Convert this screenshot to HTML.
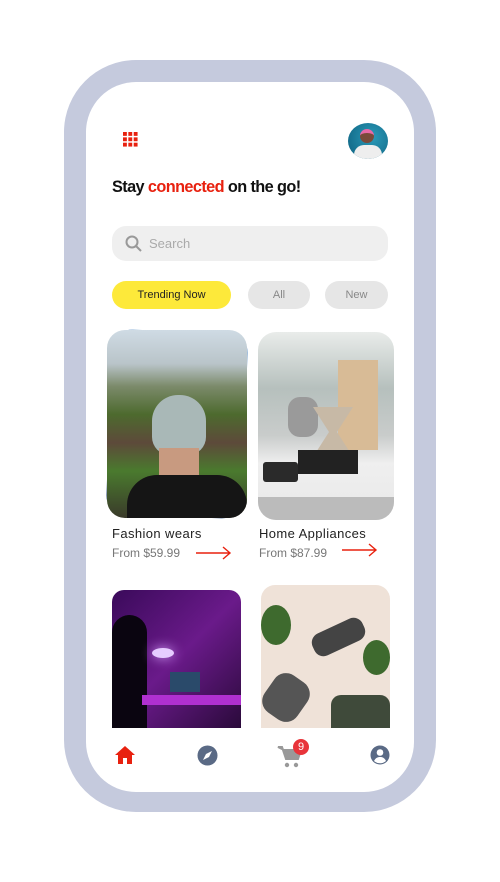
<!DOCTYPE html>
<html><head><style>
*{margin:0;padding:0;box-sizing:border-box}
body{width:500px;height:882px;background:#fff;position:relative;overflow:hidden;font-family:"Liberation Sans",sans-serif}
.frame{position:absolute;left:64px;top:60px;width:372px;height:752px;background:#c5cadd;border-radius:72px}
.screen{position:absolute;left:86px;top:82px;width:328px;height:710px;background:#fff;border-radius:50px;overflow:hidden}
.a{position:absolute}
.pill{position:absolute;top:281px;height:28px;border-radius:14px;font-size:11px;display:flex;align-items:center;justify-content:center}
.t{font-size:13px;color:#222;letter-spacing:.4px}
.p{font-size:12px;color:#777}
</style></head><body>
<div class="frame"></div>
<div class="screen"></div>
<svg class="a" style="left:123px;top:132px" width="15" height="15" viewBox="0 0 14 14" fill="#e8210f">
<rect x="0" y="0" width="3.6" height="3.6"/><rect x="5" y="0" width="3.6" height="3.6"/><rect x="10" y="0" width="3.6" height="3.6"/>
<rect x="0" y="5" width="3.6" height="3.6"/><rect x="5" y="5" width="3.6" height="3.6"/><rect x="10" y="5" width="3.6" height="3.6"/>
<rect x="0" y="10" width="3.6" height="3.6"/><rect x="5" y="10" width="3.6" height="3.6"/><rect x="10" y="10" width="3.6" height="3.6"/></svg>
<div class="a" style="left:348px;top:123px;width:40px;height:36px;border-radius:50%;background:radial-gradient(circle at 60% 40%,#2a9ab8,#0d5f7e);overflow:hidden">
<div class="a" style="left:12px;top:6px;width:14px;height:14px;border-radius:50%;background:#7a4a3a;border-top:4px solid #e86aa8"></div>
<div class="a" style="left:6px;top:22px;width:28px;height:16px;border-radius:10px 10px 0 0;background:#eee"></div></div>
<div class="a" style="left:112px;top:178px;font-size:16.3px;font-weight:bold;letter-spacing:-.6px;color:#111">Stay <span style="color:#e8210f">connected</span> on the go!</div>
<div class="a" style="left:112px;top:226px;width:276px;height:35px;border-radius:14px;background:#efefef"></div>
<svg class="a" style="left:125px;top:235px" width="17" height="17" viewBox="0 0 17 17" fill="none" stroke="#999" stroke-width="2"><circle cx="7" cy="7" r="5.5"/><path d="M11 11l5 5"/></svg>
<div class="a" style="left:149px;top:236px;font-size:13px;color:#aaa">Search</div>
<div class="pill" style="left:112px;width:119px;background:#fde93a;color:#222">Trending Now</div>
<div class="pill" style="left:248px;width:62px;background:#e6e6e6;color:#888">All</div>
<div class="pill" style="left:325px;width:63px;background:#e6e6e6;color:#888">New</div>
<div class="a" style="left:110px;top:332px;width:134px;height:184px;border-radius:18px;background:linear-gradient(#8fb3d8,#6a7fa0);transform:rotate(3deg)"></div>
<div class="a" style="left:107px;top:330px;width:140px;height:188px;border-radius:18px;overflow:hidden;background:linear-gradient(#cfdbe4 0%,#b9c4c9 18%,#7b8a6a 30%,#4d6a2e 45%,#5d4a3a 60%,#4a7a2e 75%,#3a3a2a 100%)">
<div class="a" style="left:45px;top:65px;width:54px;height:60px;border-radius:26px 26px 18px 18px;background:#a9b8b7"></div>
<div class="a" style="left:52px;top:118px;width:40px;height:30px;background:#c89a80"></div>
<div class="a" style="left:20px;top:145px;width:120px;height:50px;border-radius:30px 30px 0 0;background:#151515"></div></div>
<div class="a t" style="left:112px;top:526px">Fashion wears</div>
<div class="a p" style="left:112px;top:546px">From $59.99</div>
<svg class="a" style="left:196px;top:546px" width="36" height="14" viewBox="0 0 36 14" fill="none" stroke="#e8210f" stroke-width="1.4"><path d="M0 7h34M27 1l7 6-7 6"/></svg>
<div class="a" style="left:258px;top:332px;width:136px;height:188px;border-radius:18px;overflow:hidden;background:linear-gradient(#e9ecea 0%,#b6c0bd 30%,#c9cccb 55%,#efefef 70%,#e8e8e8 100%)">
<div class="a" style="left:80px;top:28px;width:40px;height:90px;background:#d8bb96"></div>
<div class="a" style="left:30px;top:65px;width:30px;height:40px;border-radius:12px;background:#9a9a9a"></div>
<div class="a" style="left:55px;top:75px;width:40px;height:50px;background:#c7b9a6;clip-path:polygon(0 0,100% 0,60% 50%,100% 100%,0 100%,40% 50%)"></div>
<div class="a" style="left:5px;top:130px;width:35px;height:20px;background:#2a2a2a;border-radius:3px"></div>
<div class="a" style="left:40px;top:118px;width:60px;height:24px;background:#222"></div>
<div class="a" style="left:0;top:165px;width:136px;height:23px;background:#bbb"></div></div>
<div class="a t" style="left:259px;top:526px">Home Appliances</div>
<div class="a p" style="left:259px;top:546px">From $87.99</div>
<svg class="a" style="left:342px;top:543px" width="36" height="14" viewBox="0 0 36 14" fill="none" stroke="#e8210f" stroke-width="1.4"><path d="M0 7h34M27 1l7 6-7 6"/></svg>
<div class="a" style="left:112px;top:590px;width:129px;height:138px;border-radius:12px 12px 0 0;overflow:hidden;background:linear-gradient(135deg,#3a0a5a,#6a1a8a 50%,#2a0a3a)">
<div class="a" style="left:0;top:25px;width:35px;height:113px;background:#0a0510;border-radius:20px 20px 0 0"></div>
<div class="a" style="left:40px;top:58px;width:22px;height:10px;border-radius:50%;background:#e6ccff;box-shadow:0 0 12px #d9a0ff"></div>
<div class="a" style="left:58px;top:82px;width:30px;height:20px;background:#2a4a6a"></div>
<div class="a" style="left:30px;top:105px;width:99px;height:10px;background:#b030d0"></div></div>
<div class="a" style="left:261px;top:585px;width:129px;height:143px;border-radius:14px 14px 0 0;overflow:hidden;background:#efe2d8">
<div class="a" style="left:0;top:20px;width:30px;height:40px;background:#3e6a2e;border-radius:50%"></div>
<div class="a" style="left:50px;top:40px;width:55px;height:24px;background:#444;border-radius:10px;transform:rotate(-25deg)"></div>
<div class="a" style="left:102px;top:55px;width:27px;height:35px;background:#3e6a2e;border-radius:50%"></div>
<div class="a" style="left:5px;top:90px;width:40px;height:45px;background:#555;border-radius:14px;transform:rotate(35deg)"></div>
<div class="a" style="left:70px;top:110px;width:59px;height:33px;background:#3f4a3a;border-radius:10px 10px 0 0"></div></div>
<svg class="a" style="left:114px;top:745px" width="22" height="20" viewBox="0 0 22 20" fill="#e8210f"><path d="M11 1L1 10h3v9h5v-6h4v6h5v-9h3z"/></svg>
<svg class="a" style="left:197px;top:745px" width="21" height="21" viewBox="0 0 21 21"><circle cx="10.5" cy="10.5" r="10" fill="#5a6a85"/><path d="M15 6l-6 3-3 6 6-3z" fill="#fff"/></svg>
<svg class="a" style="left:277px;top:745px" width="26" height="24" viewBox="0 0 26 24" fill="#999"><path d="M1 2h4l4 12h12l3-9H7z" stroke="#999" stroke-width="2" fill="#999"/><circle cx="10" cy="20" r="2.2"/><circle cx="19" cy="20" r="2.2"/></svg>
<div class="a" style="left:293px;top:739px;width:16px;height:16px;border-radius:50%;background:#e8343a;color:#fff;font-size:11px;text-align:center;line-height:16px">9</div>
<svg class="a" style="left:370px;top:745px" width="20" height="20" viewBox="0 0 20 20"><circle cx="10" cy="10" r="9.5" fill="#5a6a85"/><circle cx="10" cy="7.5" r="3.3" fill="#fff"/><path d="M4 16c1.5-3 3.5-4 6-4s4.5 1 6 4a9 9 0 0 1-12 0z" fill="#fff"/></svg>
</body></html>
